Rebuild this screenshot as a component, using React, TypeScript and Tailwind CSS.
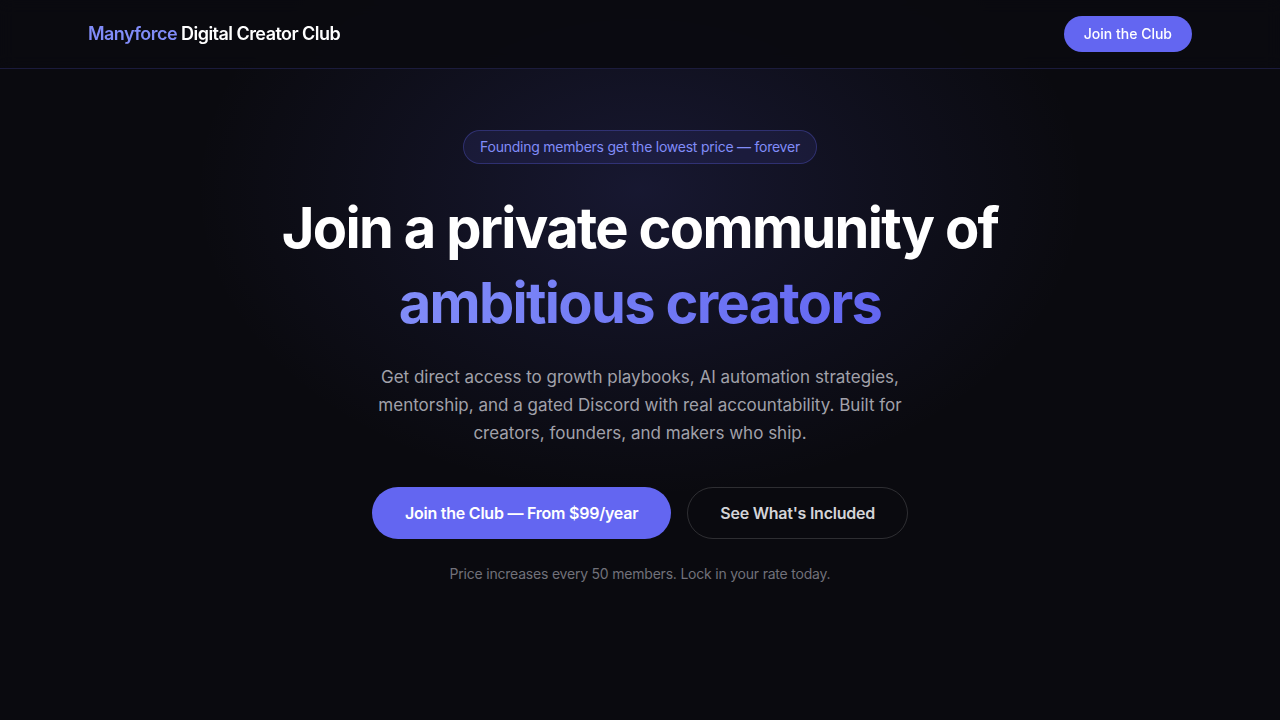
import { useState } from "react";

const Header = () => {
  return (
    <header className="sticky top-0 z-20 border-b border-[#6366f1]/20 bg-[#0a0a0f]/90 backdrop-blur">
      <div className="max-w-6xl mx-auto px-6 h-[68px] flex items-center justify-between">
        <a href="#" className="text-lg font-semibold tracking-[-0.03em] text-white">
          <span className="text-[#818cf8]">Manyforce</span> Digital Creator Club
        </a>
        <a
          href="#join"
          className="rounded-full bg-[#6366f1] px-5 py-2 text-sm font-medium text-white hover:bg-[#818cf8]"
        >
          Join the Club
        </a>
      </div>
    </header>
  );
};

const Hero = () => {
  const [hover, setHover] = useState(false);
  return (
    <section className="relative px-6 pt-[61px] pb-24 text-center">
      <div className="max-w-4xl mx-auto flex flex-col items-center">
        {/* Badge */}
        <span className="rounded-full border border-[#6366f1]/30 bg-[#6366f1]/10 px-4 py-1.5 text-sm tracking-[-0.017em] text-[#818cf8]">
          Founding members get the lowest price — forever
        </span>

        <h1 className="mt-[27px] text-[56px] font-bold leading-[75px] tracking-[-0.03em] text-white">
          Join a private community of
          <br />
          <span className="bg-gradient-to-r from-[#818cf8] to-[#6366f1] bg-clip-text text-transparent">
            ambitious creators
          </span>
        </h1>

        <p className="mt-[22px] max-w-xl text-[17px] leading-7 text-[#a1a1aa]">
          Get direct access to growth playbooks, AI automation strategies,
          mentorship, and a gated Discord with real accountability. Built for
          creators, founders, and makers who ship.
        </p>

        <div className="mt-10 flex items-center gap-4">
          <a
            href="#join"
            onMouseEnter={() => setHover(true)}
            onMouseLeave={() => setHover(false)}
            className={`rounded-full border border-transparent px-8 py-[13px] text-base font-semibold tracking-[-0.015em] text-white ${
              hover ? "bg-[#818cf8]" : "bg-[#6366f1]"
            }`}
          >
            Join the Club — From $99/year
          </a>
          <a
            href="#included"
            className="rounded-full border border-white/15 px-8 py-[13px] text-base font-semibold tracking-[-0.015em] text-[#d4d4d8] hover:bg-white/5"
          >
            See What's Included
          </a>
        </div>

        <p className="mt-[25px] text-sm tracking-[-0.015em] text-[#71717a]">
          Price increases every 50 members. Lock in your rate today.
        </p>
      </div>
    </section>
  );
};

export default function App() {
  return (
    <div className="relative min-h-screen overflow-hidden bg-[#0a0a0f] font-['Inter',sans-serif] antialiased">
      {/* glow */}
      <div className="pointer-events-none absolute left-1/2 top-[-120px] h-[620px] w-[900px] -translate-x-1/2 rounded-full bg-[radial-gradient(ellipse_at_center,rgba(99,102,241,0.15),rgba(99,102,241,0.05)_45%,transparent_70%)]" />
      <div className="relative">
        <Header />
        <Hero />
      </div>
    </div>
  );
}
